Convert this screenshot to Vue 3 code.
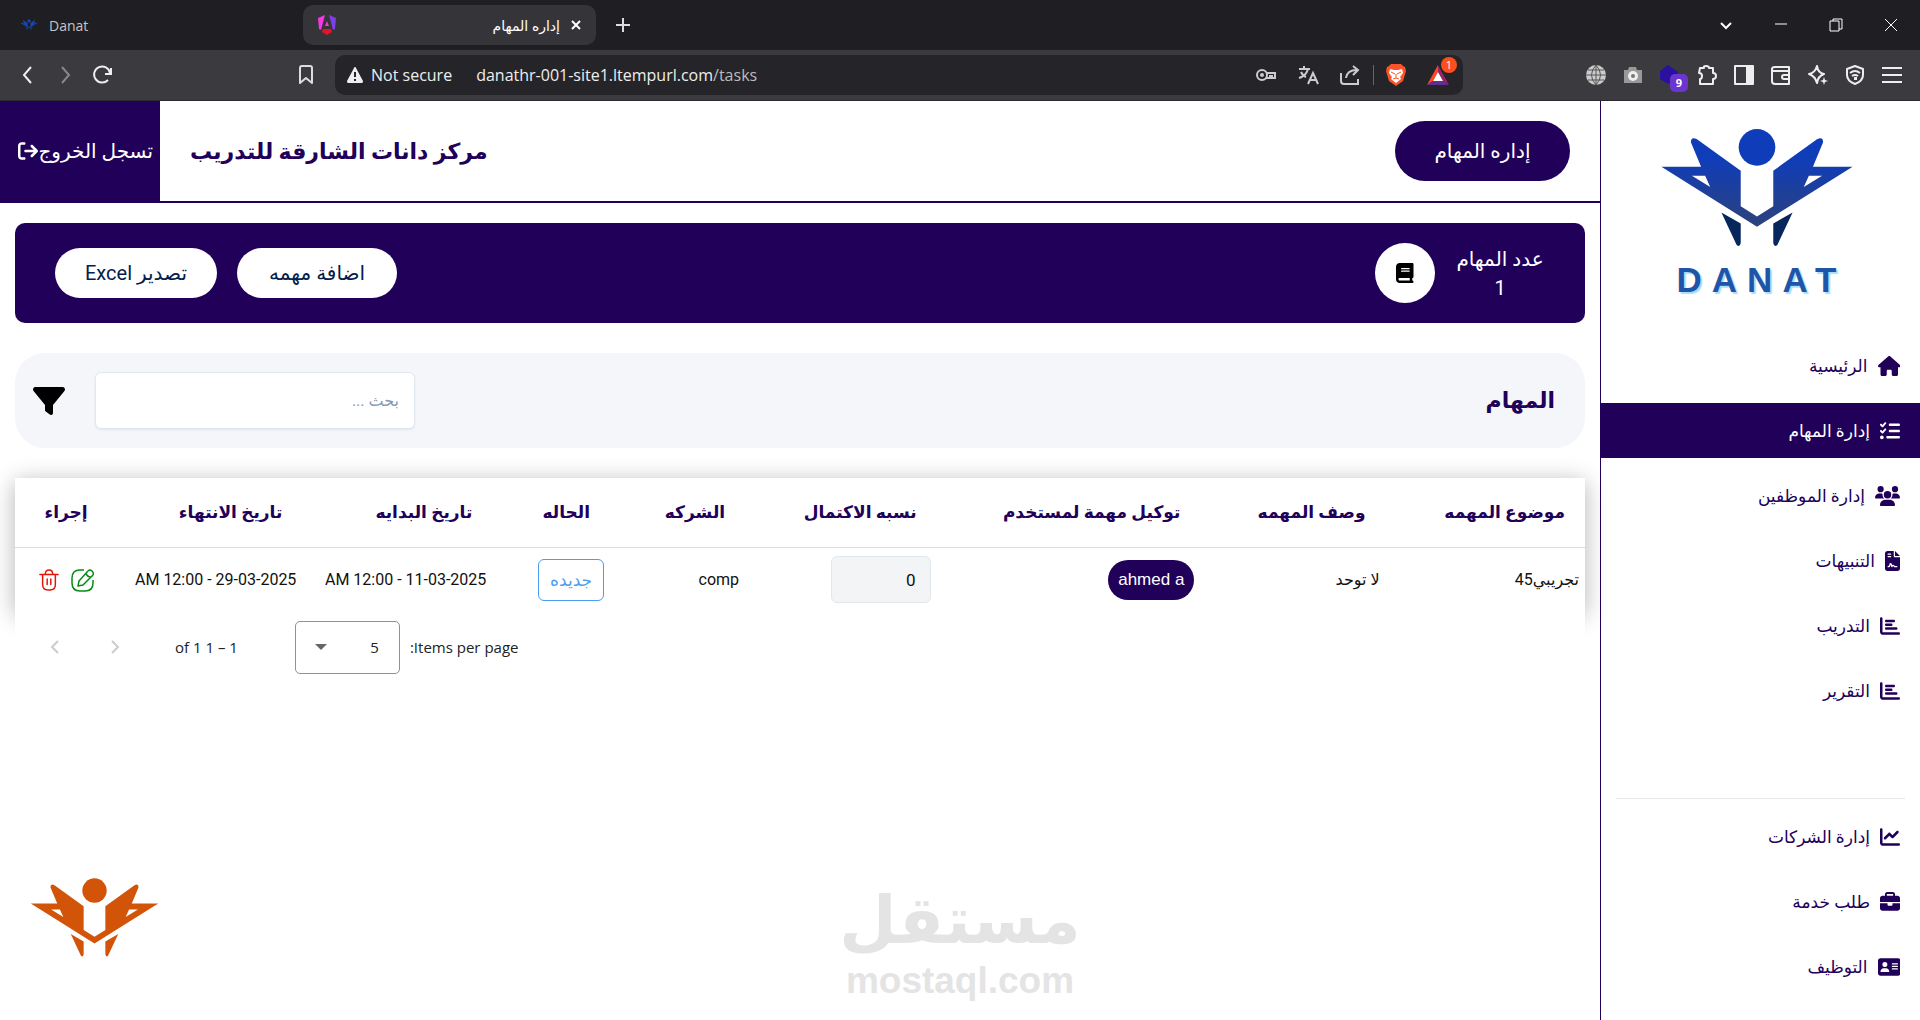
<template>
    <div class="page">
        <div class="browser">
            <div class="tabs">
                <div class="tab">
                    <svg class="fav" viewBox="0 0 192 118" fill="#1546b5">
                        <circle cx="96" cy="20" r="18" />
                        <path :d="logoWings" fill-rule="evenodd" />
                        <path :d="logoLegs" />
                    </svg>
                    <span>Danat</span>
                </div>
                <div class="tab active">
                    <svg width="22" height="22" viewBox="0 0 22 22">
                        <path d="M9 1L2 4l1 11 2 1z" fill="#f637e3" />
                        <path d="M13 1l7 3-1 11-2 1z" fill="#7b3fe4" />
                        <path d="M11 7l2 5H9z" fill="#f637c8" />
                        <path d="M7 15h8l1 3-5 3-5-3z" fill="#e6122d" />
                    </svg>
                    <span class="tab-title">إداره المهام</span>
                    <button class="icon-btn" aria-label="Close tab">
                        <svg width="10" height="10" viewBox="0 0 10 10"><path d="M1 1l8 8M9 1l-8 8" stroke="#fff" stroke-width="2" /></svg>
                    </button>
                </div>
                <button class="icon-btn plus" aria-label="New tab">
                    <svg width="14" height="14" viewBox="0 0 14 14"><path d="M7 0v14M0 7h14" stroke="#ddd" stroke-width="2" /></svg>
                </button>
                <div class="window-buttons">
                    <button v-for="b in windowButtons" :key="b.label" class="icon-btn" :aria-label="b.label">
                        <svg width="16" height="16" viewBox="0 0 16 16" fill="none" stroke="#fff"><path :d="b.path" :stroke-width="b.width" /></svg>
                    </button>
                </div>
            </div>
            <div class="toolbar">
                <div class="nav-buttons">
                    <button v-for="b in navButtons" :key="b.label" class="icon-btn" :aria-label="b.label">
                        <svg width="20" height="20" viewBox="0 0 20 20" fill="none" :stroke="b.color" stroke-width="2"><path :d="b.path" /></svg>
                    </button>
                </div>
                <button class="icon-btn" aria-label="Bookmark">
                    <svg width="20" height="20" viewBox="0 0 20 20" fill="none" stroke="#ddd" stroke-width="2"><path d="M4 18V3q0-2 2-2h8q2 0 2 2v15l-6-5z" stroke-linejoin="round" /></svg>
                </button>
                <div class="address">
                    <svg width="18" height="18" viewBox="0 0 18 18"><path d="M9 1q1 0 1 1l7 13q0 2-1 2H2q-1 0-1-2L8 2q0-1 1-1z" fill="#eee" /><path d="M9 6v5M9 13v2" stroke="#26252b" stroke-width="2" /></svg>
                    <span class="insecure">Not secure</span>
                    <span class="url">danathr-001-site1.ltempurl.com<i>/tasks</i></span>
                    <div class="address-icons">
                        <svg width="22" height="22" viewBox="0 0 22 22" fill="none" stroke="#ccc" stroke-width="2"><circle cx="7" cy="11" r="5" /><circle cx="7" cy="11" r="1" /><path d="M11 9h9v5h-3v-2h-2v2h-4" /></svg>
                        <svg width="22" height="22" viewBox="0 0 22 22" fill="none" stroke="#ccc" stroke-width="2"><path d="M2 5h11M7 2v3M11 5q-2 7-9 9M4 8q2 4 5 5M11 20l5-11 5 11M13 16h6" /></svg>
                        <svg width="22" height="22" viewBox="0 0 22 22" fill="none" stroke="#ccc" stroke-width="2"><path d="M2 9v8q0 3 3 3h14v-5M7 14q1-8 11-8M14 2l5 4-5 5" /></svg>
                        <span class="divider"></span>
                        <svg width="20" height="24" viewBox="0 0 20 24"><path d="M5 1h10l2 2 2 1 1 4-3 10-7 5-7-5L0 8l1-4 2-1z" fill="#fb542b" /><path d="M4 6l4 1h4l4-1 1 4-3 4 1 2-5 4-5-4 1-2-3-4z" fill="#fff" /><path d="M5 9l4 2M15 9l-4 2M10 11v4M7 16l3-1 3 1" stroke="#fb542b" fill="none" /></svg>
                        <div class="badged">
                            <svg width="24" height="22" viewBox="0 0 24 22"><path d="M12 1v7l-5 9-6 4z" fill="#ff4724" /><path d="M12 1l11 20-6-4-5-9z" fill="#9e1f63" /><path d="M1 21l6-4h10l6 4z" fill="#662d91" /><path d="M12 8l5 9H7z" fill="#fff" /></svg>
                            <span class="badge orange">1</span>
                        </div>
                    </div>
                </div>
                <div class="extensions">
                    <svg width="20" height="20" viewBox="0 0 20 20"><circle cx="10" cy="10" r="10" fill="#ccc" /><path d="M0 10h20M10 0v20M2 5h16M2 15h16M10 0q-9 10 0 20q9-10 0-20" fill="none" stroke="#555" /></svg>
                    <svg width="20" height="20" viewBox="0 0 20 20"><path d="M1 5h4l1-3h7l1 3h5v13H1z" fill="#999" /><circle cx="10" cy="11" r="5" fill="#eee" /><circle cx="10" cy="11" r="2" fill="#777" /></svg>
                    <div class="badged">
                        <svg width="20" height="20" viewBox="0 0 20 20"><path d="M8 0l10 7-3 7-7 5-8-5V6z" fill="#2a0fa0" /></svg>
                        <span class="badge purple">9</span>
                    </div>
                    <svg v-for="(p, i) in toolIcons" :key="i" width="20" height="20" viewBox="0 0 20 20" fill="none" stroke="#eee" stroke-width="2" stroke-linejoin="round">
                        <path :d="p.line" /><path v-if="p.solid" :d="p.solid" fill="#eee" stroke="none" />
                    </svg>
                </div>
            </div>
        </div>

        <div class="app" dir="rtl">
            <aside class="sidebar">
                <div class="logo">
                    <svg width="196" height="120" viewBox="0 0 192 118">
                        <linearGradient id="wing" gradientUnits="userSpaceOnUse" x1="0" y1="0" x2="0" y2="98">
                            <stop offset="0.3" stop-color="#0f3dba" />
                            <stop offset="1" stop-color="#2c427c" />
                        </linearGradient>
                        <circle cx="96" cy="20" r="18" fill="#0f3dba" />
                        <path :d="logoWings" fill="url(#wing)" fill-rule="evenodd" />
                        <path :d="logoLegs" fill="#06265c" />
                    </svg>
                    <span class="logo-text">DANAT</span>
                </div>
                <nav class="menu">
                    <a v-for="item in menu" :key="item.text" href="#" :class="{ active: item.active }">
                        <svg height="20" :viewBox="item.icon.box"><path :d="item.icon.path" fill="currentColor" fill-rule="evenodd" /></svg>
                        <span>{{ item.text }}</span>
                    </a>
                </nav>
                <hr>
                <nav class="menu">
                    <a v-for="item in menuBottom" :key="item.text" href="#">
                        <svg height="20" :viewBox="item.icon.box"><path :d="item.icon.path" fill="currentColor" fill-rule="evenodd" /></svg>
                        <span>{{ item.text }}</span>
                    </a>
                </nav>
            </aside>

            <main class="main">
                <header class="header">
                    <button class="page-name">إداره المهام</button>
                    <h1>مركز دانات الشارقة للتدريب</h1>
                    <button class="logout">
                        <span>تسجل الخروج</span>
                        <svg width="20" height="20" viewBox="0 0 512 512"><path :d="icons.exit.path" fill="currentColor" /></svg>
                    </button>
                </header>

                <section class="summary">
                    <div class="count">
                        <span>عدد المهام</span>
                        <span>1</span>
                    </div>
                    <div class="circle">
                        <svg height="20" :viewBox="icons.book.box"><path :d="icons.book.path" /></svg>
                    </div>
                    <div class="actions">
                        <button>اضافة مهمه</button>
                        <button>تصدير Excel</button>
                    </div>
                </section>

                <section class="filter">
                    <h2>المهام</h2>
                    <input type="text" placeholder="بحث ..." aria-label="بحث">
                    <button class="icon-btn" aria-label="فلتر">
                        <svg width="32" height="32" viewBox="0 0 512 512"><path :d="icons.filter.path" /></svg>
                    </button>
                </section>

                <section class="list">
                    <table>
                        <colgroup>
                            <col v-for="c in columns" :key="c.title" :style="{ width: c.width + '%' }">
                        </colgroup>
                        <thead>
                            <tr>
                                <th v-for="c in columns" :key="c.title">{{ c.title }}</th>
                            </tr>
                        </thead>
                        <tbody>
                            <tr v-for="task in tasks" :key="task.subject">
                                <td>{{ task.subject }}</td>
                                <td>{{ task.description }}</td>
                                <td><span class="user">{{ task.user }}</span></td>
                                <td><input class="progress" type="text" :value="task.progress" aria-label="نسبه الاكتمال" disabled></td>
                                <td>{{ task.company }}</td>
                                <td><button class="status">{{ task.status }}</button></td>
                                <td>{{ task.start }}</td>
                                <td>{{ task.end }}</td>
                                <td>
                                    <div class="row-actions">
                                        <button class="icon-btn edit" aria-label="تعديل">
                                            <svg width="24" height="24" viewBox="0 0 24 24" fill="none" stroke="currentColor" stroke-width="1.5" stroke-linejoin="round"><path d="M13 2H9Q1 2 1 10v5q0 8 8 8h5q8 0 8-8v-3" /><path d="M8 13l9-10q2-2 4 0t1 4l-10 10-5 1zM15 5q1 4 5 4" /></svg>
                                        </button>
                                        <button class="icon-btn delete" aria-label="حذف">
                                            <svg width="20" height="22" viewBox="0 0 22 24" fill="none" stroke="currentColor" stroke-width="1.6" stroke-linecap="round"><path d="M1 6h20M7 5q0-4 4-4t4 4M4 7v10q0 6 6 6h2q6 0 6-6V7M9 11v6M13 11v6" /></svg>
                                        </button>
                                    </div>
                                </td>
                            </tr>
                        </tbody>
                    </table>
                </section>

                <div class="paginator">
                    <label for="size">Items per page:</label>
                    <div class="size">
                        <select id="size">
                            <option>5</option>
                        </select>
                        <svg width="12" height="6" viewBox="0 0 12 6"><path d="M0 0h12L6 6z" fill="#666" /></svg>
                    </div>
                    <span class="range">1 – 1 of 1</span>
                    <button class="icon-btn" aria-label="Previous page" disabled>
                        <svg width="10" height="14" viewBox="0 0 10 14"><path d="M2 1l6 6-6 6" /></svg>
                    </button>
                    <button class="icon-btn" aria-label="Next page" disabled>
                        <svg width="10" height="14" viewBox="0 0 10 14"><path d="M8 1L2 7l6 6" /></svg>
                    </button>
                </div>
            </main>
        </div>

        <svg class="float-logo" width="131" height="80" viewBox="0 0 192 118" fill="#d15409">
            <circle cx="96" cy="20" r="18" />
            <path :d="logoWings" fill-rule="evenodd" />
            <path :d="logoLegs" />
        </svg>
        <div class="watermark">
            <span class="word">مستقل</span>
            <span class="site">mostaql.com</span>
        </div>
    </div>
</template>

<script setup>
const logoWings = 'M2 39H41L31 15Q31 9 37 12L80 43V78L96 88L112 78V43L155 12Q161 9 161 15L151 39H190L96 98ZM32 48L50 59L45 48ZM160 48L142 59L147 48Z';
const logoLegs = 'M61 84L80 95V114Q79 119 76 116ZM131 84L112 95V114Q113 119 116 116Z';

// 512px grid icons
const icons = {
    house: { box: '0 0 576 512', path: 'M575.8 255.5c0 18-15 32.1-32 32.1l-32 0 .7 160.2c0 2.7-.2 5.4-.5 8.1l0 16.2c0 22.1-17.9 40-40 40l-16 0c-1.1 0-2.2 0-3.3-.1c-1.4 .1-2.8 .1-4.2 .1L416 512l-24 0c-22.1 0-40-17.9-40-40l0-24 0-64c0-17.7-14.3-32-32-32l-64 0c-17.7 0-32 14.3-32 32l0 64 0 24c0 22.1-17.9 40-40 40l-24 0-31.9 0c-1.5 0-3-.1-4.5-.2c-1.2 .1-2.4 .2-3.6 .2l-16 0c-22.1 0-40-17.9-40-40l0-112c0-.9 0-1.9 .1-2.8l0-69.7-32 0c-18 0-32-14-32-32.1c0-9 3-17 10-24L266.4 8c7-7 15-8 22-8s15 2 21 7L564.8 231.5c8 7 12 15 11 24z' },
    tasks: { box: '0 0 512 512', path: 'M152.1 38.2c9.9 8.9 10.7 24 1.8 33.9l-72 80c-4.4 4.9-10.6 7.8-17.2 7.9s-12.9-2.4-17.6-7L7 113C-2.3 103.6-2.3 88.4 7 79s24.6-9.4 33.9 0l22.1 22.1 55.1-61.2c8.9-9.9 24-10.7 33.9-1.8zm0 160c9.9 8.9 10.7 24 1.8 33.9l-72 80c-4.4 4.9-10.6 7.8-17.2 7.9s-12.9-2.4-17.6-7L7 273c-9.4-9.4-9.4-24.6 0-33.9s24.6-9.4 33.9 0l22.1 22.1 55.1-61.2c8.9-9.9 24-10.7 33.9-1.8zM224 96c0-17.7 14.3-32 32-32l224 0c17.7 0 32 14.3 32 32s-14.3 32-32 32l-224 0c-17.7 0-32-14.3-32-32zm0 160c0-17.7 14.3-32 32-32l224 0c17.7 0 32 14.3 32 32s-14.3 32-32 32l-224 0c-17.7 0-32-14.3-32-32zM160 416c0-17.7 14.3-32 32-32l288 0c17.7 0 32 14.3 32 32s-14.3 32-32 32l-288 0c-17.7 0-32-14.3-32-32zM48 368a48 48 0 1 1 0 96 48 48 0 1 1 0-96z' },
    users: { box: '0 0 640 512', path: 'M144 0a80 80 0 1 1 0 160A80 80 0 1 1 144 0zM512 0a80 80 0 1 1 0 160A80 80 0 1 1 512 0zM0 298.7C0 239.8 47.8 192 106.7 192l42.7 0c15.9 0 31 3.5 44.6 9.7c-1.3 7.2-1.9 14.7-1.9 22.3c0 38.2 16.8 72.5 43.3 96c-.2 0-.4 0-.7 0L21.3 320C9.6 320 0 310.4 0 298.7zM405.3 320c-.2 0-.4 0-.7 0c26.6-23.5 43.3-57.8 43.3-96c0-7.6-.7-15-1.9-22.3c13.6-6.3 28.7-9.7 44.6-9.7l42.7 0C592.2 192 640 239.8 640 298.7c0 11.8-9.6 21.3-21.3 21.3l-213.3 0zM224 224a96 96 0 1 1 192 0 96 96 0 1 1 -192 0zM128 485.3C128 411.7 187.7 352 261.3 352l117.3 0C452.3 352 512 411.7 512 485.3c0 14.7-11.9 26.7-26.7 26.7l-330.7 0c-14.7 0-26.7-11.9-26.7-26.7z' },
    file: { box: '0 0 384 512', path: 'M64 0C28.7 0 0 28.7 0 64L0 448c0 35.3 28.7 64 64 64l256 0c35.3 0 64-28.7 64-64l0-288-128 0c-17.7 0-32-14.3-32-32L224 0 64 0zM256 0l0 128 128 0L256 0zM80 64l64 0c8.8 0 16 7.2 16 16s-7.2 16-16 16L80 96c-8.8 0-16-7.2-16-16s7.2-16 16-16zm0 64l64 0c8.8 0 16 7.2 16 16s-7.2 16-16 16l-64 0c-8.8 0-16-7.2-16-16s7.2-16 16-16zm54.2 253.8c-6.1 20.3-24.8 34.2-46 34.2L80 416c-8.8 0-16-7.2-16-16s7.2-16 16-16l8.2 0c7.1 0 13.3-4.6 15.3-11.4l14.9-49.5c3.4-11.3 13.8-19.1 25.6-19.1s22.2 7.7 25.6 19.1l11.6 38.6c7.4-6.2 16.8-9.7 26.8-9.7c15.9 0 30.4 9 37.5 23.2l4.4 8.8 54.1 0c8.8 0 16 7.2 16 16s-7.2 16-16 16l-64 0c-6.1 0-11.6-3.4-14.3-8.8l-8.8-17.7c-1.7-3.4-5.1-5.5-8.8-5.5s-7.2 2.1-8.8 5.5l-8.8 17.7c-2.9 5.9-9.2 9.4-15.7 8.8s-12.1-5.1-13.9-11.3L144 349z' },
    chart: { box: '0 0 512 512', path: 'M32 32c17.7 0 32 14.3 32 32l0 336c0 8.8 7.2 16 16 16l400 0c17.7 0 32 14.3 32 32s-14.3 32-32 32L80 480c-44.2 0-80-35.8-80-80L0 64C0 46.3 14.3 32 32 32zm96 96c0-17.7 14.3-32 32-32l192 0c17.7 0 32 14.3 32 32s-14.3 32-32 32l-192 0c-17.7 0-32-14.3-32-32zm32 64l128 0c17.7 0 32 14.3 32 32s-14.3 32-32 32l-128 0c-17.7 0-32-14.3-32-32s14.3-32 32-32zm0 96l256 0c17.7 0 32 14.3 32 32s-14.3 32-32 32l-256 0c-17.7 0-32-14.3-32-32s14.3-32 32-32z' },
    line: { box: '0 0 512 512', path: 'M64 64c0-17.7-14.3-32-32-32S0 46.3 0 64L0 400c0 44.2 35.8 80 80 80l400 0c17.7 0 32-14.3 32-32s-14.3-32-32-32L80 416c-8.8 0-16-7.2-16-16L64 64zm406.6 86.6c12.5-12.5 12.5-32.8 0-45.3s-32.8-12.5-45.3 0L320 210.7l-57.4-57.4c-12.5-12.5-32.8-12.5-45.3 0l-112 112c-12.5 12.5-12.5 32.8 0 45.3s32.8 12.5 45.3 0L240 221.3l57.4 57.4c12.5 12.5 32.8 12.5 45.3 0l128-128z' },
    briefcase: { box: '0 0 512 512', path: 'M184 48l144 0c4.4 0 8 3.6 8 8l0 40L176 96l0-40c0-4.4 3.6-8 8-8zm-56 8l0 40L64 96C28.7 96 0 124.7 0 160l0 96 192 0 128 0 192 0 0-96c0-35.3-28.7-64-64-64l-64 0 0-40c0-30.9-25.1-56-56-56L184 0c-30.9 0-56 25.1-56 56zM512 288l-192 0 0 32c0 17.7-14.3 32-32 32l-64 0c-17.7 0-32-14.3-32-32l0-32L0 288 0 416c0 35.3 28.7 64 64 64l384 0c35.3 0 64-28.7 64-64l0-128z' },
    card: { box: '0 0 576 512', path: 'M64 32C28.7 32 0 60.7 0 96L0 416c0 35.3 28.7 64 64 64l448 0c35.3 0 64-28.7 64-64l0-320c0-35.3-28.7-64-64-64L64 32zm80 256l64 0c44.2 0 80 35.8 80 80c0 8.8-7.2 16-16 16L80 384c-8.8 0-16-7.2-16-16c0-44.2 35.8-80 80-80zm-32-96a64 64 0 1 1 128 0 64 64 0 1 1 -128 0zm256-32l128 0c8.8 0 16 7.2 16 16s-7.2 16-16 16l-128 0c-8.8 0-16-7.2-16-16s7.2-16 16-16zm0 64l128 0c8.8 0 16 7.2 16 16s-7.2 16-16 16l-128 0c-8.8 0-16-7.2-16-16s7.2-16 16-16zm0 64l128 0c8.8 0 16 7.2 16 16s-7.2 16-16 16l-128 0c-8.8 0-16-7.2-16-16s7.2-16 16-16z' },
    book: { box: '0 0 448 512', path: 'M96 0C43 0 0 43 0 96L0 416c0 53 43 96 96 96l288 0 32 0c17.7 0 32-14.3 32-32s-14.3-32-32-32l0-64c17.7 0 32-14.3 32-32l0-320c0-17.7-14.3-32-32-32L384 0 96 0zm0 384l256 0 0 64L96 448c-17.7 0-32-14.3-32-32s14.3-32 32-32zm32-240c0-8.8 7.2-16 16-16l192 0c8.8 0 16 7.2 16 16s-7.2 16-16 16l-192 0c-8.8 0-16-7.2-16-16zm16 48l192 0c8.8 0 16 7.2 16 16s-7.2 16-16 16l-192 0c-8.8 0-16-7.2-16-16s7.2-16 16-16z' },
    filter: { path: 'M3.9 54.9C10.5 40.9 24.5 32 40 32l432 0c15.5 0 29.5 8.9 36.1 22.9s4.6 30.5-5.2 42.5L320 320.9 320 448c0 12.1-6.8 23.2-17.7 28.6s-23.8 4.3-33.5-3l-64-48c-8.1-6-12.8-15.5-12.8-25.6l0-79.1L9 97.3C-.7 85.4-2.8 68.8 3.9 54.9z' },
    exit: { path: 'M502.6 278.6c12.5-12.5 12.5-32.8 0-45.3l-128-128c-12.5-12.5-32.8-12.5-45.3 0s-12.5 32.8 0 45.3L402.7 224 192 224c-17.7 0-32 14.3-32 32s14.3 32 32 32l210.7 0-73.4 73.4c-12.5 12.5-12.5 32.8 0 45.3s32.8 12.5 45.3 0l128-128zM160 96c17.7 0 32-14.3 32-32s-14.3-32-32-32L96 32C43 32 0 75 0 128L0 384c0 53 43 96 96 96l64 0c17.7 0 32-14.3 32-32s-14.3-32-32-32l-64 0c-17.7 0-32-14.3-32-32l0-256c0-17.7 14.3-32 32-32l64 0z' },
};

const menu = [
    { text: 'الرئيسية', icon: icons.house },
    { text: 'إدارة المهام', icon: icons.tasks, active: true },
    { text: 'إدارة الموظفين', icon: icons.users },
    { text: 'التنبيهات', icon: icons.file },
    { text: 'التدريب', icon: icons.chart },
    { text: 'التقرير', icon: icons.chart },
];

const menuBottom = [
    { text: 'إدارة الشركات', icon: icons.line },
    { text: 'طلب خدمة', icon: icons.briefcase },
    { text: 'التوظيف', icon: icons.card },
];

const columns = [
    { title: 'موضوع المهمه', width: 12.7 },
    { title: 'وصف المهمه', width: 11.8 },
    { title: 'توكيل مهمة لمستخدم', width: 16.8 },
    { title: 'نسبه الاكتمال', width: 12.2 },
    { title: 'الشركه', width: 8.6 },
    { title: 'الحاله', width: 7.5 },
    { title: 'تاريخ البدايه', width: 12.1 },
    { title: 'تاريخ الانتهاء', width: 12.4 },
    { title: 'إجراء', width: 5.9 },
];

const tasks = [
    {
        subject: 'تجريبي45',
        description: 'لا توحد',
        user: 'ahmed a',
        progress: 0,
        company: 'comp',
        status: 'جديده',
        start: '11-03-2025 - 12:00 AM',
        end: '29-03-2025 - 12:00 AM',
    },
];

const windowButtons = [
    { label: 'Tabs', path: 'M3 6l5 5 5-5', width: 2 },
    { label: 'Minimize', path: 'M2 7h12', width: 1 },
    { label: 'Restore', path: 'M2 4h9v10H2zM5 4V2h9v10h-3', width: 1 },
    { label: 'Close', path: 'M2 2l12 12M14 2L2 14', width: 1 },
];

const navButtons = [
    { label: 'Back', path: 'M13 2l-7 8 7 8', color: '#eee' },
    { label: 'Forward', path: 'M7 2l7 8-7 8', color: '#88878b' },
    { label: 'Reload', path: 'M16 15a8 8 0 1 1 2-7M19 3v6h-6', color: '#eee' },
];

const toolIcons = [
    { line: 'M3 3h4q-1-2 2-2t3 2h4v5q3 0 3 3t-3 3v5H3v-5q2 0 2-3t-3-3z' },
    { line: 'M1 1h18v18H1z', solid: 'M12 1h7v18h-7z' },
    { line: 'M18 6V2H4Q1 2 1 4v12q0 3 3 3h14V6H2M19 10h-6q-2 0-2 2t2 2h6' },
    { line: 'M9 1q1 7 7 8-6 2-7 9-2-7-8-9 6-1 8-8z', solid: 'M16 12l1 3 3 1-3 1-1 3-1-3-3-1 3-1z' },
    { line: 'M10 1l8 3v6q0 6-8 9-8-3-8-9V4zM5 8q5-4 10 0M7 11q3-2 6 0', solid: 'M9 12h3v3H9z' },
    { line: 'M0 3h20M0 10h20M0 17h20' },
];
</script>

<style>
body {
    margin: 0;
}
</style>

<style scoped>
* {
    box-sizing: border-box;
}

.page {
    position: relative;
    display: flex;
    flex-direction: column;
    min-height: 100vh;
    overflow: hidden;
    background: #fff;
    font-family: "Roboto", "DejaVu Sans", sans-serif;
    font-size: 16px;
}

button, input, select {
    font-family: inherit;
    font-size: inherit;
}

svg {
    display: block;
    flex: none;
}

.icon-btn {
    display: flex;
    align-items: center;
    justify-content: center;
    padding: 0;
    border: none;
    background: none;
}

/* browser bars */
.browser {
    color: #eee;
    font-family: "Open Sans", "DejaVu Sans", sans-serif;
}

.tabs {
    display: flex;
    align-items: center;
    height: 50px;
    background: #1f1e23;
    font-size: 14px;
}

.tab {
    display: flex;
    align-items: center;
    gap: 11px;
    width: 303px;
    height: 40px;
    padding: 0 20px;
    color: #c5c5c8;
}

.tab.active {
    width: 293px;
    padding: 0 15px 0 13px;
    border-radius: 10px;
    background: #353439;
    color: #fff;
}

.tab-title {
    flex: 1;
    text-align: right;
}

.fav {
    width: 18px;
}

.plus {
    margin-left: 20px;
}

.window-buttons {
    display: flex;
    gap: 39px;
    margin-left: auto;
    padding-right: 21px;
}

.toolbar {
    display: flex;
    align-items: center;
    height: 51px;
    padding: 0 18px;
    border-bottom: 1px solid #2a292e;
    background: #3b3a3f;
}

.nav-buttons {
    display: flex;
    gap: 17px;
    width: 278px;
}

.address {
    display: flex;
    flex: 1;
    align-items: center;
    height: 40px;
    margin: 0 123px 0 19px;
    padding: 0 13px 0 11px;
    border-radius: 10px;
    background: #252429;
}

.insecure {
    margin: 0 24px 0 7px;
}

.url i {
    color: #bbb;
    font-style: normal;
}

.address-icons {
    display: flex;
    align-items: center;
    gap: 20px;
    margin-left: auto;
}

.divider {
    width: 1px;
    height: 20px;
    margin: 0 -8px;
    background: #666;
}

.extensions {
    display: flex;
    align-items: center;
    gap: 17px;
}

.badged {
    position: relative;
}

.badge {
    position: absolute;
    height: 16px;
    min-width: 16px;
    border-radius: 8px;
    color: #fff;
    font-size: 11px;
    line-height: 16px;
    text-align: center;
}

.badge.orange {
    top: -7px;
    right: -7px;
    background: #fb4f1c;
}

.badge.purple {
    top: 9px;
    right: -8px;
    height: 18px;
    min-width: 18px;
    border-radius: 5px;
    background: #6c35cf;
    line-height: 18px;
    font-weight: bold;
}

/* page */
.app {
    display: flex;
    flex: 1;
}

.sidebar {
    width: 320px;
    border-left: 1px solid #210059;
}

.logo {
    display: flex;
    flex-direction: column;
    align-items: center;
    height: 237px;
    padding-top: 26px;
    padding-right: 8px;
}

.logo-text {
    direction: ltr;
    margin-top: 13px;
    padding-left: 10px;
    color: #1f55a8;
    font-family: "Liberation Sans", sans-serif;
    font-size: 35px;
    font-weight: bold;
    letter-spacing: 10px;
    line-height: 40px;
    text-shadow: 2px 2px 1px #a8dcf8;
}

.menu {
    display: flex;
    flex-direction: column;
    gap: 10px;
}

.menu a {
    display: flex;
    align-items: center;
    gap: 10px;
    height: 55px;
    padding: 0 20px;
    color: #210059;
    font-size: 17px;
    text-decoration: none;
}

.menu a.active {
    background: #210059;
    color: #fff;
}

.sidebar hr {
    margin: 80px 15px 10px;
    border: none;
    border-top: 1px solid #e5e7eb;
}

.main {
    flex: 1;
    min-width: 0;
}

.header {
    display: flex;
    align-items: center;
    height: 102px;
    border-bottom: 2px solid #210059;
    color: #210059;
}

.page-name {
    width: 175px;
    height: 60px;
    margin-right: 30px;
    border: none;
    border-radius: 30px;
    background: #210059;
    color: #fff;
    font-size: 20px;
}

.header h1 {
    margin: 0 auto 0 30px;
    font-size: 22px;
    font-weight: bold;
}

.logout {
    display: flex;
    align-items: center;
    align-self: stretch;
    width: 160px;
    padding: 0 7px;
    border: none;
    background: #210059;
    color: #fff;
    font-size: 20px;
}

.summary {
    display: flex;
    align-items: center;
    height: 100px;
    margin: 20px 15px 30px;
    padding: 0 40px;
    border-radius: 10px;
    background: #210059;
    color: #fff;
    font-size: 20px;
}

.count {
    display: flex;
    flex-direction: column;
    align-items: center;
    gap: 5px;
    min-width: 90px;
    margin-left: 20px;
}

.circle {
    display: flex;
    align-items: center;
    justify-content: center;
    width: 60px;
    height: 60px;
    border-radius: 50%;
    background: #fff;
}

.actions {
    display: flex;
    gap: 20px;
    margin-right: auto;
}

.actions button {
    height: 50px;
    min-width: 160px;
    padding: 0 30px;
    border: none;
    border-radius: 25px;
    background: #fff;
    color: #03204d;
    font-size: 20px;
}

.filter {
    display: flex;
    align-items: center;
    height: 95px;
    margin: 0 15px 30px;
    padding: 0 30px 0 18px;
    border-radius: 30px;
    background: #f4f6fa;
}

.filter h2 {
    margin: 0 0 0 auto;
    color: #210059;
    font-size: 22px;
    font-weight: bold;
}

.filter input {
    width: 320px;
    height: 57px;
    margin-left: 30px;
    padding: 0 15px;
    border: 1px solid #e1e7ef;
    border-radius: 6px;
    box-shadow: 0 1px 2px #e1e7ef;
}

.filter input::placeholder {
    color: #8699b3;
}

.list {
    margin: 0 15px;
    box-shadow: 0 4px 22px rgba(0, 0, 0, 0.3);
}

table {
    width: 100%;
    border-collapse: collapse;
    table-layout: fixed;
    background: #fff;
}

th {
    height: 69px;
    padding: 0 20px 0 0;
    border-bottom: 1px solid #ddd;
    color: #210059;
    font-size: 17px;
    text-align: right;
    white-space: nowrap;
}

td {
    height: 65px;
    padding: 0 6px 0 0;
    color: #111;
    white-space: nowrap;
}

.user {
    display: inline-block;
    padding: 0 10px;
    border-radius: 20px;
    background: #210059;
    color: #fff;
    font-family: "Liberation Sans", sans-serif;
    font-size: 17px;
    line-height: 40px;
}

.progress {
    display: block;
    width: 100px;
    height: 47px;
    padding: 0 14px;
    border: 1px solid #e1e7ef;
    border-radius: 6px;
    background: #f3f4f6;
    color: #111;
    font-size: 17px;
}

.status {
    width: 66px;
    height: 42px;
    padding: 0;
    border: 1px solid #4a9df0;
    border-radius: 6px;
    background: #fff;
    color: #4a9df0;
    font-size: 17px;
}

.row-actions {
    display: flex;
    align-items: center;
    gap: 12px;
    padding-right: 7px;
}

.edit {
    color: #078a14;
}

.delete {
    color: #e01507;
}

/* hides the lower part of the table shadow */
.paginator {
    position: relative;
    display: flex;
    align-items: center;
    justify-content: flex-end;
    height: 70px;
    margin: 0 15px;
    padding-left: 35px;
    background: #fff;
    color: #222;
    font-family: "Open Sans", sans-serif;
    font-size: 15px;
}

.size {
    position: relative;
    display: flex;
    align-items: center;
    margin: 0 10px 0 57px;
}

.size svg {
    position: absolute;
    left: 20px;
}

.size select {
    width: 105px;
    height: 53px;
    padding: 0 20px;
    appearance: none;
    border: 1px solid #919191;
    border-radius: 5px;
    background: #fff;
    color: #222;
}

.range {
    margin-left: 55px;
}

.paginator .icon-btn + .icon-btn {
    margin-right: 50px;
}

.paginator .icon-btn path {
    fill: none;
    stroke: #ccc;
    stroke-width: 2;
}

/* floating over the page */
.float-logo {
    position: absolute;
    left: 29px;
    bottom: 63px;
}

.watermark {
    position: absolute;
    left: 50%;
    bottom: 19px;
    display: flex;
    flex-direction: column;
    align-items: center;
    width: 240px;
    margin-left: -120px;
    color: #e4e4e4;
    font-weight: bold;
}

.word {
    font-family: "DejaVu Sans", sans-serif;
    font-size: 66px;
    line-height: 80px;
}

.site {
    font-family: "Liberation Sans", sans-serif;
    font-size: 37px;
    line-height: 40px;
}
</style>
